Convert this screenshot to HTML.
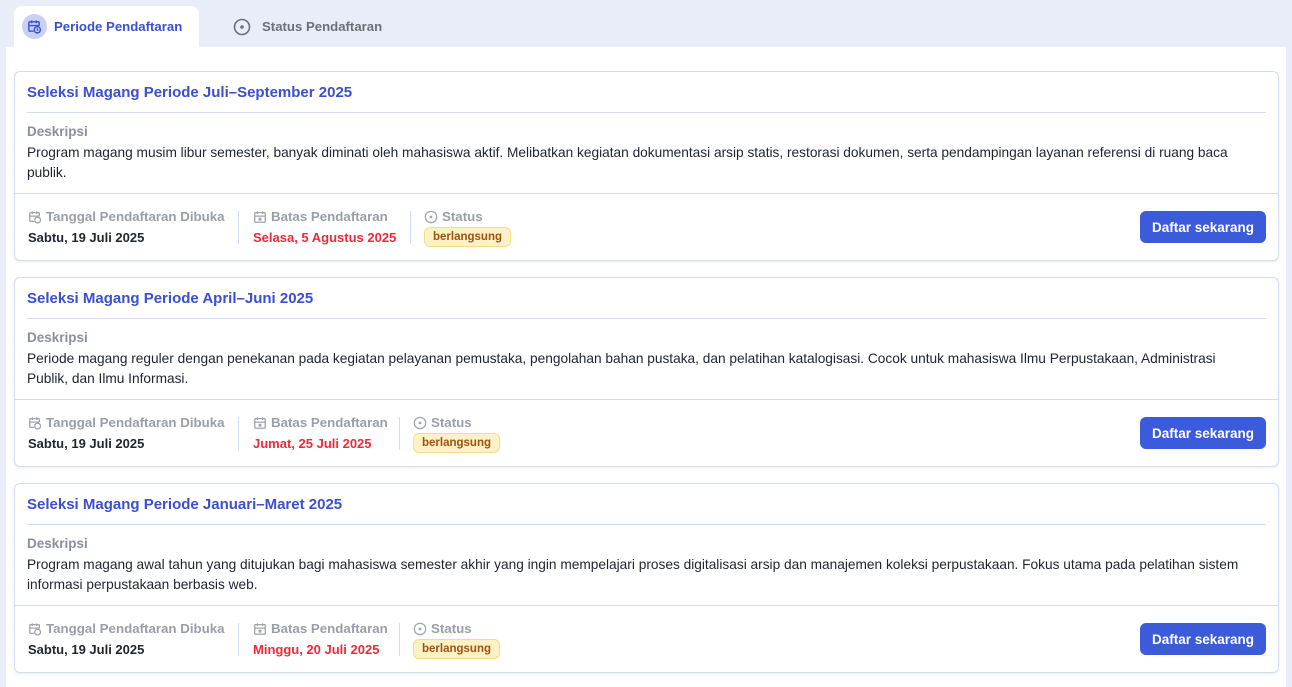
<!DOCTYPE html><html><head><style>
*{box-sizing:border-box;margin:0;padding:0}
body{width:1292px;height:681px;overflow:hidden;background:#e9edf9;font-family:"Liberation Sans",sans-serif;font-size:14px;color:#1f2430;position:relative}
.tab{position:absolute;top:6px;height:41px;display:flex;align-items:center;font-size:13.2px;font-weight:bold}
.t1{left:14px;width:185px;background:#fff;border-radius:8px 8px 0 0;color:#3b4fd0;padding-left:8px}
.t2{left:233px;color:#6b6f7a}
.ic{width:25px;height:25px;border-radius:50%;background:#c8d0f3;display:flex;align-items:center;justify-content:center;margin-right:7px}
.main{position:absolute;left:6px;top:47px;width:1280px;height:640px;background:#fff}
.card{position:absolute;left:14px;width:1265px;height:190px;border:1px solid #d6dcf0;border-radius:6px;background:#fff;box-shadow:0 1px 3px rgba(0,0,0,.08)}
.title{position:absolute;left:12px;top:12px;font-size:15px;font-weight:bold;color:#3b4fd0}
.hr{position:absolute;left:12px;right:12px;top:40px;border-top:1px solid #d6dcf0}
.dl{position:absolute;left:12px;top:52px;color:#8a8f9c;font-weight:bold;font-size:13.5px}
.desc{position:absolute;left:12px;right:24px;top:71px;line-height:20px;font-size:13.7px}
.foot{position:absolute;left:0;right:0;top:121px;border-top:1px solid #d6dcf0}
.col{position:absolute;top:14px}
.lab{color:#9a9ea9;font-weight:bold;font-size:13.3px;display:flex;align-items:center;gap:4px;height:17px}
.val{font-weight:bold;font-size:13px;margin-top:5px}
.red{color:#ee2a3a}
.sep{position:absolute;top:17px;height:33px;border-left:1px solid #d6dcf0}
.badge{display:inline-block;margin-top:2px;background:#fdf1c6;border:1px solid #f6dc8a;color:#a0520f;border-radius:6px;font-size:11.5px;font-weight:bold;padding:3px 8px}
.btn{position:absolute;right:12px;top:17px;width:126px;height:32px;background:#3b5bdb;color:#fff;border-radius:6px;font-weight:bold;font-size:13.5px;display:flex;align-items:center;justify-content:center}
</style></head><body>
<div class="tab t1"><span class="ic"><svg width="15" height="15" viewBox="0 0 16 16" fill="none" stroke="#3b4fd0" stroke-width="1.5"><path d="M7 13H3a1 1 0 0 1-1-1V4a1 1 0 0 1 1-1h9a1 1 0 0 1 1 1v3M2 7h11M5 1.5v3M10 1.5v3"/><circle cx="11" cy="11.5" r="3.3"/><path d="M11 10v1.6l1 .7"/></svg></span>Periode Pendaftaran</div>
<div class="tab t2"><svg width="18" height="18" viewBox="0 0 18 18" style="margin-right:11px"><circle cx="9" cy="9" r="7.5" fill="none" stroke="#6b6f7a" stroke-width="1.6"/><circle cx="9" cy="9" r="1.8" fill="#6b6f7a"/></svg>Status Pendaftaran</div>
<div class="main"></div>

<div class="card" style="top:71px">
<div class="title">Seleksi Magang Periode Juli–September 2025</div><div class="hr"></div>
<div class="dl">Deskripsi</div>
<div class="desc">Program magang musim libur semester, banyak diminati oleh mahasiswa aktif. Melibatkan kegiatan dokumentasi arsip statis, restorasi dokumen, serta pendampingan layanan referensi di ruang baca publik.</div>
<div class="foot">
<div class="col" style="left:13px"><div class="lab"><svg width="14" height="14" viewBox="0 0 16 16" fill="none" stroke="#a0a4ae" stroke-width="1.5"><path d="M7 13H3a1 1 0 0 1-1-1V4a1 1 0 0 1 1-1h9a1 1 0 0 1 1 1v3M2 7h11M5 1.5v3M10 1.5v3"/><circle cx="11" cy="11.5" r="3.3"/></svg>Tanggal Pendaftaran Dibuka</div><div class="val">Sabtu, 19 Juli 2025</div></div>
<div class="sep" style="left:223px"></div>
<div class="col" style="left:238px"><div class="lab"><svg width="14" height="14" viewBox="0 0 16 16" fill="none" stroke="#a0a4ae" stroke-width="1.5"><rect x="2" y="3" width="12" height="11" rx="1"/><path d="M2 7h12M5 1.5v3M11 1.5v3M6.5 9l3 3M9.5 9l-3 3"/></svg>Batas Pendaftaran</div><div class="val red">Selasa, 5 Agustus 2025</div></div>
<div class="sep" style="left:395px"></div>
<div class="col" style="left:409px"><div class="lab"><svg width="14" height="14" viewBox="0 0 18 18"><circle cx="9" cy="9" r="7.3" fill="none" stroke="#a0a4ae" stroke-width="1.6"/><circle cx="9" cy="9" r="1.8" fill="#a0a4ae"/></svg>Status</div><div class="badge">berlangsung</div></div>
<div class="btn">Daftar sekarang</div>
</div></div>

<div class="card" style="top:277px">
<div class="title">Seleksi Magang Periode April–Juni 2025</div><div class="hr"></div>
<div class="dl">Deskripsi</div>
<div class="desc">Periode magang reguler dengan penekanan pada kegiatan pelayanan pemustaka, pengolahan bahan pustaka, dan pelatihan katalogisasi. Cocok untuk mahasiswa Ilmu Perpustakaan, Administrasi Publik, dan Ilmu Informasi.</div>
<div class="foot">
<div class="col" style="left:13px"><div class="lab"><svg width="14" height="14" viewBox="0 0 16 16" fill="none" stroke="#a0a4ae" stroke-width="1.5"><path d="M7 13H3a1 1 0 0 1-1-1V4a1 1 0 0 1 1-1h9a1 1 0 0 1 1 1v3M2 7h11M5 1.5v3M10 1.5v3"/><circle cx="11" cy="11.5" r="3.3"/></svg>Tanggal Pendaftaran Dibuka</div><div class="val">Sabtu, 19 Juli 2025</div></div>
<div class="sep" style="left:223px"></div>
<div class="col" style="left:238px"><div class="lab"><svg width="14" height="14" viewBox="0 0 16 16" fill="none" stroke="#a0a4ae" stroke-width="1.5"><rect x="2" y="3" width="12" height="11" rx="1"/><path d="M2 7h12M5 1.5v3M11 1.5v3M6.5 9l3 3M9.5 9l-3 3"/></svg>Batas Pendaftaran</div><div class="val red">Jumat, 25 Juli 2025</div></div>
<div class="sep" style="left:384px"></div>
<div class="col" style="left:398px"><div class="lab"><svg width="14" height="14" viewBox="0 0 18 18"><circle cx="9" cy="9" r="7.3" fill="none" stroke="#a0a4ae" stroke-width="1.6"/><circle cx="9" cy="9" r="1.8" fill="#a0a4ae"/></svg>Status</div><div class="badge">berlangsung</div></div>
<div class="btn">Daftar sekarang</div>
</div></div>

<div class="card" style="top:483px">
<div class="title">Seleksi Magang Periode Januari–Maret 2025</div><div class="hr"></div>
<div class="dl">Deskripsi</div>
<div class="desc">Program magang awal tahun yang ditujukan bagi mahasiswa semester akhir yang ingin mempelajari proses digitalisasi arsip dan manajemen koleksi perpustakaan. Fokus utama pada pelatihan sistem informasi perpustakaan berbasis web.</div>
<div class="foot">
<div class="col" style="left:13px"><div class="lab"><svg width="14" height="14" viewBox="0 0 16 16" fill="none" stroke="#a0a4ae" stroke-width="1.5"><path d="M7 13H3a1 1 0 0 1-1-1V4a1 1 0 0 1 1-1h9a1 1 0 0 1 1 1v3M2 7h11M5 1.5v3M10 1.5v3"/><circle cx="11" cy="11.5" r="3.3"/></svg>Tanggal Pendaftaran Dibuka</div><div class="val">Sabtu, 19 Juli 2025</div></div>
<div class="sep" style="left:223px"></div>
<div class="col" style="left:238px"><div class="lab"><svg width="14" height="14" viewBox="0 0 16 16" fill="none" stroke="#a0a4ae" stroke-width="1.5"><rect x="2" y="3" width="12" height="11" rx="1"/><path d="M2 7h12M5 1.5v3M11 1.5v3M6.5 9l3 3M9.5 9l-3 3"/></svg>Batas Pendaftaran</div><div class="val red">Minggu, 20 Juli 2025</div></div>
<div class="sep" style="left:384px"></div>
<div class="col" style="left:398px"><div class="lab"><svg width="14" height="14" viewBox="0 0 18 18"><circle cx="9" cy="9" r="7.3" fill="none" stroke="#a0a4ae" stroke-width="1.6"/><circle cx="9" cy="9" r="1.8" fill="#a0a4ae"/></svg>Status</div><div class="badge">berlangsung</div></div>
<div class="btn">Daftar sekarang</div>
</div></div>
</body></html>
